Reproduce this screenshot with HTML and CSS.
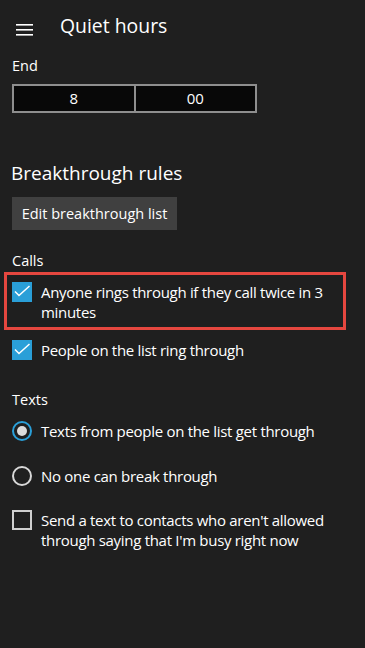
FILE: index.html
```html
<!DOCTYPE html>
<html lang="en">
<head>
<meta charset="utf-8">
<title>Quiet hours</title>
<link rel="stylesheet" href="styles.css">
</head>
<body>
<div class="page">
  <header class="header">
    <svg class="hamburger" width="18" height="12" viewBox="0 0 18 12" aria-hidden="true">
      <rect x="0" y="0" width="17" height="1.6" fill="#fff"/>
      <rect x="0" y="5" width="17" height="1.6" fill="#fff"/>
      <rect x="0" y="10" width="17" height="1.6" fill="#fff"/>
    </svg>
    <h1 class="title">Quiet hours</h1>
  </header>

  <div class="label label-end">End</div>
  <div class="timebox">
    <div class="timecell">8</div>
    <div class="timecell timecell-right">00</div>
  </div>

  <h2 class="section-title">Breakthrough rules</h2>
  <button class="btn">Edit breakthrough list</button>

  <div class="label label-calls">Calls</div>
  <div class="option option-highlight">
    <span class="check checked">
      <svg width="20" height="20" viewBox="0 0 20 20"><path d="M3 9.5 L7 13.5 L17.5 4" fill="none" stroke="#fff" stroke-width="1.5"/></svg>
    </span>
    <span class="option-text">Anyone rings through if they call twice in 3 minutes</span>
  </div>
  <div class="option option-second">
    <span class="check checked">
      <svg width="20" height="20" viewBox="0 0 20 20"><path d="M3 9.5 L7 13.5 L17.5 4" fill="none" stroke="#fff" stroke-width="1.5"/></svg>
    </span>
    <span class="option-text">People on the list ring through</span>
  </div>

  <div class="label label-texts">Texts</div>
  <div class="option option-radio1">
    <span class="radio selected"><span class="dot"></span></span>
    <span class="option-text">Texts from people on the list get through</span>
  </div>
  <div class="option option-radio2">
    <span class="radio"></span>
    <span class="option-text">No one can break through</span>
  </div>
  <div class="option option-last">
    <span class="check"></span>
    <span class="option-text">Send a text to contacts who aren't allowed through saying that I'm busy right now</span>
  </div>
</div>
</body>
</html>
```

FILE: styles.css
```css
html, body {
  margin: 0;
  padding: 0;
  background: #1f1f1f;
}
body {
  width: 365px;
  height: 648px;
  overflow: hidden;
  color: #ffffff;
  font-family: "Open Sans", "Noto Sans", "Liberation Sans", sans-serif;
}
.page {
  display: flex;
  flex-direction: column;
  align-items: flex-start;
}
.header {
  display: flex;
  align-items: center;
  height: 52px;
  width: 100%;
}
.hamburger {
  margin-left: 16px;
  margin-top: 7px;
  flex: none;
}
.title {
  margin: 0 0 0 26px;
  font-size: 19.4px;
  line-height: 28px;
  font-weight: 400;
}
.label {
  font-size: 14.5px;
  line-height: 20px;
  margin-left: 12px;
}
.label-end { margin-top: 4px; }
.label-calls { margin-top: 21px; }
.label-texts { margin-top: 30px; }

.timebox {
  margin: 8px 0 0 12px;
  width: 241px;
  height: 25px;
  border: 2px solid #8e8e8e;
  background: #080808;
  display: flex;
}
.timecell {
  flex: 1;
  text-align: center;
  font-size: 15px;
  line-height: 25px;
}
.timecell-right {
  border-left: 2px solid #8e8e8e;
}

.section-title {
  margin: 46px 0 0 11px;
  font-size: 19px;
  line-height: 28px;
  font-weight: 400;
}
.btn {
  margin: 10px 0 0 12px;
  height: 33px;
  width: 165px;
  padding: 0;
  border: none;
  background: #404040;
  color: #fff;
  font-family: inherit;
  font-size: 14.5px;
  text-align: center;
}

.option {
  display: flex;
  align-items: flex-start;
  gap: 9px;
  margin-left: 12px;
  width: 328px;
}
.option-text {
  font-size: 15px;
  letter-spacing: -0.3px;
  line-height: 20px;
}
.option-highlight {
  margin-top: 1px;
  margin-left: 4px;
  border: 3px solid #e5473f;
  padding: 7px 3px 5px 5px;
}
.option-second { margin-top: 10px; }
.option-radio1 { margin-top: 11px; }
.option-radio2 { margin-top: 25px; }
.option-last { margin-top: 24px; }

.check {
  flex: none;
  width: 20px;
  height: 20px;
  box-sizing: border-box;
  border: 2px solid #cfcfcf;
}
.check.checked {
  border: none;
  background: #2a9fd8;
}
.check svg { display: block; }

.radio {
  flex: none;
  width: 20px;
  height: 20px;
  box-sizing: border-box;
  border: 2px solid #d8d8d8;
  border-radius: 50%;
  display: flex;
  align-items: center;
  justify-content: center;
}
.radio.selected {
  border-color: #2a9fd8;
}
.dot {
  width: 10px;
  height: 10px;
  border-radius: 50%;
  background: #dcdcdc;
}
```
